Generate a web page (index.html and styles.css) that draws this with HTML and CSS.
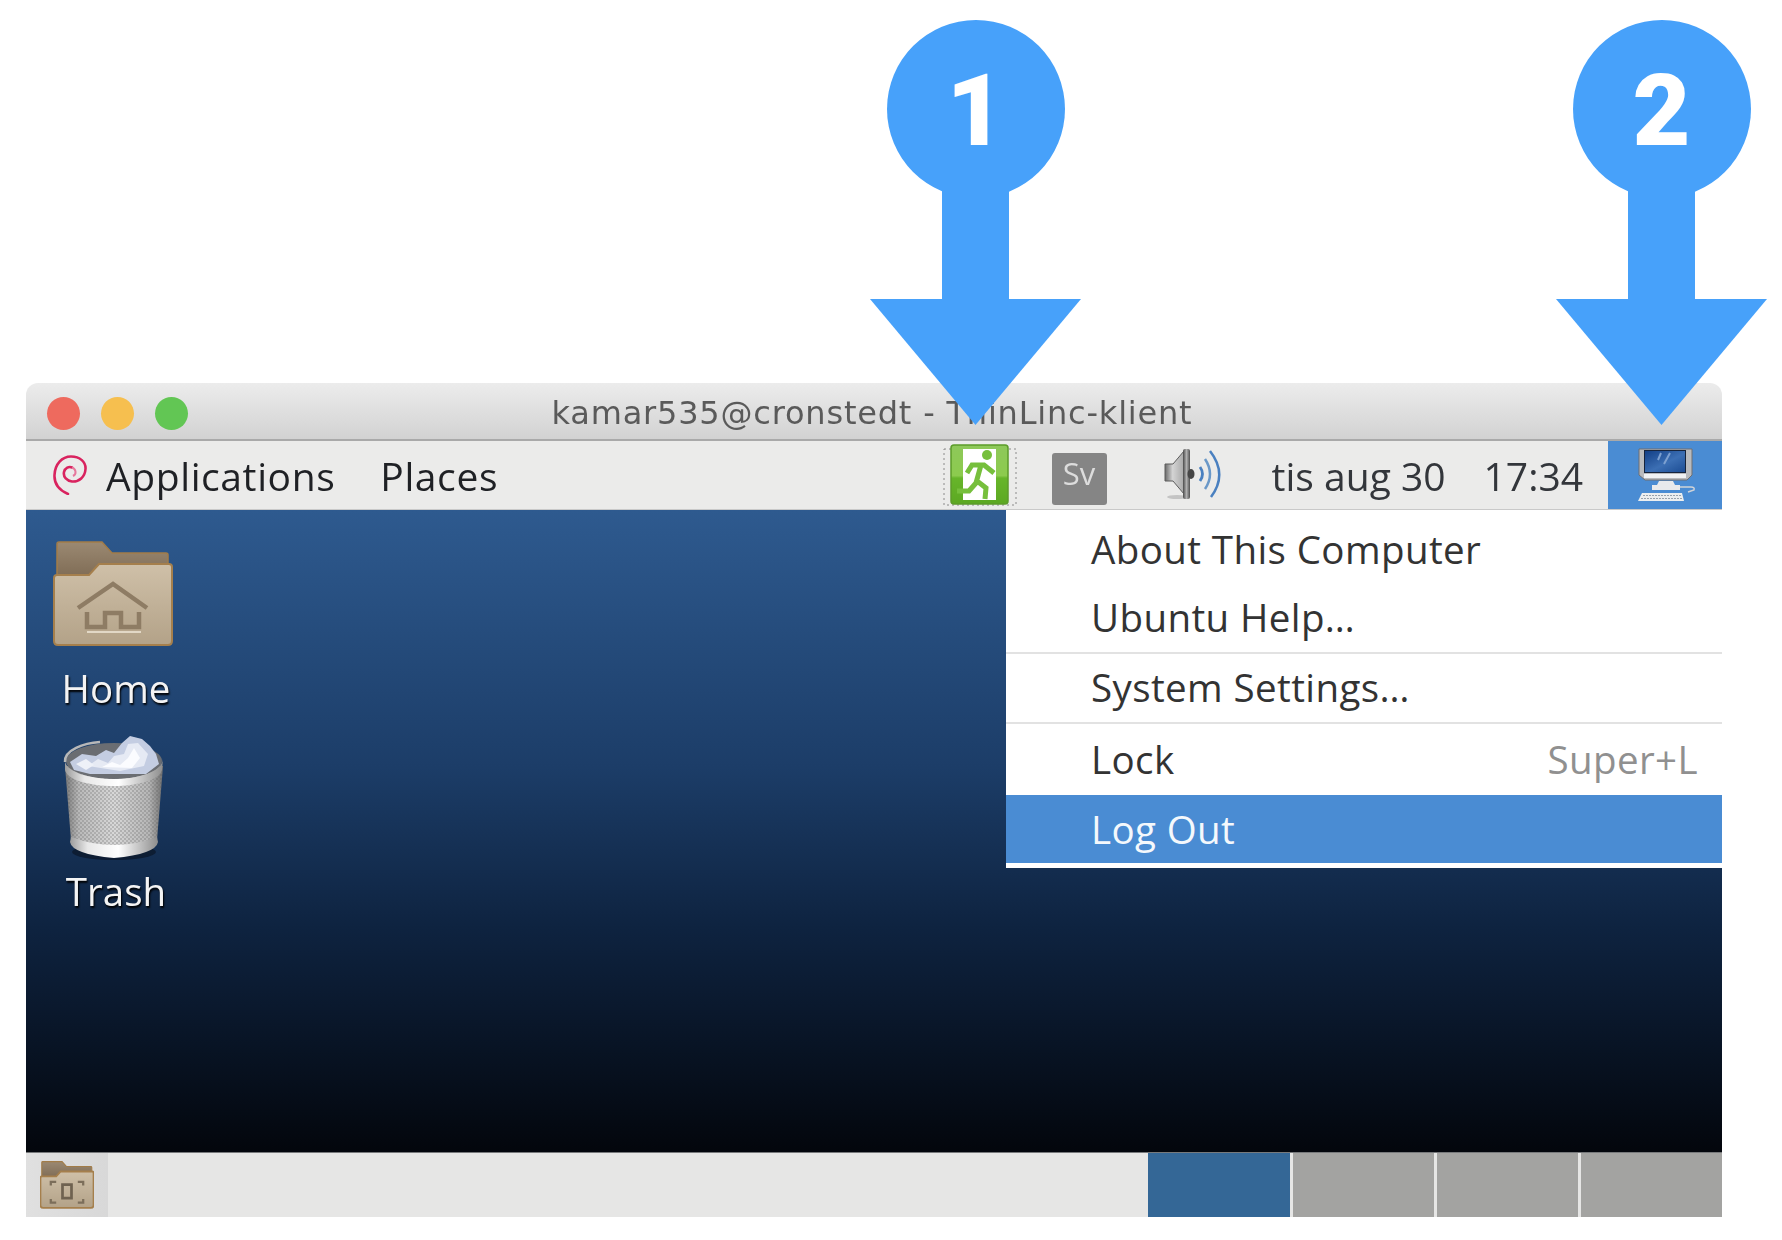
FILE: index.html
```html
<!DOCTYPE html>
<html lang="sv">
<head>
    <meta charset="UTF-8">
    <title>ThinLinc-klient</title>
    <link rel="stylesheet" href="styles.css">
</head>
<body>

    <div class="window">
        <div class="titlebar">
            <div class="lights">
                <span class="light red"></span>
                <span class="light yellow"></span>
                <span class="light green"></span>
            </div>
            <div class="title">kamar535@cronstedt - ThinLinc-klient</div>
        </div>

        <div class="menubar">
            <svg class="debian" viewBox="0 0 34 40">
                <path d="M15 39C6 35 1 29 1.500 20 2 9 9 1.500 18 1.500 27 1.500 33 7 32.500 14 32 22 26 27 19 26.500 14 26 10 22 11 17 12 13 16 11 19 12.500" fill="none" stroke="#d9235f" stroke-width="2.600" stroke-linecap="round"/>
                <path d="M19 12.500C23 14 24 19 20 21" fill="none" stroke="#e6789c" stroke-width="2"/>
            </svg>
            <span class="menu-name apps">Applications</span>
            <span class="menu-name places">Places</span>

            <div class="tray">
                <svg class="tray-exit" viewBox="0 0 74 64">
                    <defs>
                        <linearGradient id="exitGreen" x1="0" y1="0" x2="0" y2="1">
                            <stop offset="0" stop-color="#8ec85a"/>
                            <stop offset=".52" stop-color="#8ccb4e"/>
                            <stop offset=".56" stop-color="#67b52a"/>
                            <stop offset="1" stop-color="#5ca822"/>
                        </linearGradient>
                    </defs>
                    <rect x="1" y="6" width="72" height="56" fill="none" stroke="#8a8a8a" stroke-width="1" stroke-dasharray="2 3"/>
                    <rect x="8" y="2" width="57" height="59" rx="3" fill="url(#exitGreen)" stroke="#5c9c2a" stroke-width="1.500"/>
                    <rect x="20" y="6" width="33" height="51" fill="#fff"/>
                    <circle cx="44" cy="12" r="5" fill="#76bf3c"/>
                    <path d="M24 30L29 22H41L51 30M38 22L33 40M34 38L43 45 42 56M33 40L26 48H14" fill="none" stroke="#76bf3c" stroke-width="5"/>
                </svg>

                <div class="tray-lang">Sv</div>

                <svg class="tray-sound" viewBox="0 0 60 54">
                    <defs>
                        <linearGradient id="cone" x1="0" y1="0" x2="1" y2="0">
                            <stop offset="0" stop-color="#6a6a6a"/>
                            <stop offset=".4" stop-color="#d4d4d4"/>
                            <stop offset="1" stop-color="#a8a8a8"/>
                        </linearGradient>
                        <linearGradient id="disk" x1="0" y1="0" x2="1" y2="0">
                            <stop offset="0" stop-color="#4a4a4a"/>
                            <stop offset=".5" stop-color="#b0b0b0"/>
                            <stop offset="1" stop-color="#505050"/>
                        </linearGradient>
                    </defs>
                    <ellipse cx="14" cy="49" rx="10" ry="2" fill="#c4c4c4"/>
                    <path d="M2 16H10L21 3V46L10 33H2Z" fill="url(#cone)" stroke="#5d5d5d" stroke-width="1"/>
                    <rect x="20" y="1" width="7" height="50" rx="2" fill="url(#disk)"/>
                    <ellipse cx="28" cy="26" rx="3.500" ry="5" fill="#454545"/>
                    <path d="M37 19Q42 26 37 33" fill="none" stroke="#4a80c0" stroke-width="2.800"/>
                    <path d="M42 11Q52 26 42 41" fill="none" stroke="#6a98c8" stroke-width="2.500"/>
                    <path d="M47 3Q65 26 48 49" fill="none" stroke="#4a80c0" stroke-width="2.500"/>
                </svg>

                <span class="clock date">tis aug 30</span>
                <span class="clock time">17:34</span>

                <div class="computer">
                    <svg class="computer-icon" viewBox="0 0 58 54">
                        <defs>
                            <linearGradient id="screen" x1="0" y1="0" x2="1" y2="1">
                                <stop offset="0" stop-color="#123f86"/>
                                <stop offset=".55" stop-color="#3c6fb4"/>
                                <stop offset="1" stop-color="#1c4d94"/>
                            </linearGradient>
                        </defs>
                        <path d="M1 1H54V27L49 32H7L1 27Z" fill="#b9bbbe" stroke="#6e6f72" stroke-width="1"/>
                        <rect x="6" y="2" width="42" height="23" fill="#16243c"/>
                        <rect x="7" y="3" width="40" height="21" fill="url(#screen)"/>
                        <path d="M23 5L20 12M32 5L26 16" stroke="#7da0d0" stroke-width="2"/>
                        <rect x="6" y="26" width="42" height="4" fill="#f0f2f4"/>
                        <path d="M21 33H35L37 37H42V42H14V37H19Z" fill="#e8eaec"/>
                        <path d="M42 39H53Q57 39 56 42L50 44" fill="none" stroke="#d0d3d8" stroke-width="1.500"/>
                        <path d="M4 45H44L46 53H0Z" fill="#eceeef"/>
                        <path d="M5 47.500H43M3 50.500H45" stroke="#98a2ac" stroke-width="1.200" stroke-dasharray="2 1"/>
                    </svg>
                </div>
            </div>
        </div>

        <div class="desktop">
            <div class="desktop-icons">
                <div class="desktop-icon">
                    <svg class="folder" viewBox="0 0 120 106">
                        <defs>
                            <linearGradient id="folderBack" x1="0" y1="0" x2="0" y2="1">
                                <stop offset="0" stop-color="#9b8972"/>
                                <stop offset="1" stop-color="#7f6c55"/>
                            </linearGradient>
                            <linearGradient id="folderFront" x1="0" y1="0" x2="0" y2="1">
                                <stop offset="0" stop-color="#cfc0a8"/>
                                <stop offset="1" stop-color="#b3a288"/>
                            </linearGradient>
                        </defs>
                        <path d="M4 3Q4 1 6 1H49L59 12H113Q115 12 115 14V36H4Z" fill="url(#folderBack)" stroke="#a27c48" stroke-width="1.500"/>
                        <path d="M1 37Q1 34 4 34H36L46 23H116Q119 23 119 26V100Q119 104 115 104H5Q1 104 1 100Z" fill="url(#folderFront)" stroke="#a57f4c" stroke-width="2"/>
                        <path d="M25 67L60 43 94 67" fill="none" stroke="#8e7c64" stroke-width="4.500"/>
                        <path d="M34 71V86H52V72H68V86H86V71" fill="none" stroke="#8e7c64" stroke-width="4.500"/>
                        <path d="M34 91H88" stroke="#e2d8c6" stroke-width="2"/>
                    </svg>
                    <span class="icon-label home-label">Home</span>
                </div>
                <div class="desktop-icon">
                    <svg class="trash" viewBox="0 0 106 127">
                        <defs>
                            <linearGradient id="can" x1="0" y1="0" x2="1" y2="0">
                                <stop offset="0" stop-color="#777"/>
                                <stop offset=".14" stop-color="#b9b9b9"/>
                                <stop offset=".5" stop-color="#d8d8d8"/>
                                <stop offset=".86" stop-color="#b5b5b5"/>
                                <stop offset="1" stop-color="#6f6f6f"/>
                            </linearGradient>
                            <linearGradient id="rim" x1="0" y1="0" x2="1" y2="0">
                                <stop offset="0" stop-color="#9c9c9c"/>
                                <stop offset=".2" stop-color="#e8e8e8"/>
                                <stop offset=".55" stop-color="#fff"/>
                                <stop offset="1" stop-color="#8d8d8d"/>
                            </linearGradient>
                            <pattern id="mesh" width="4" height="4" patternUnits="userSpaceOnUse">
                                <circle cx="1" cy="1" r=".8" fill="#555"/>
                                <circle cx="3" cy="3" r=".8" fill="#666"/>
                            </pattern>
                        </defs>
                        <ellipse cx="54" cy="118" rx="42" ry="8" fill="#0a1626" opacity=".7"/>
                        <path d="M5 32L11 106Q54 126 97 106L103 32Z" fill="url(#can)"/>
                        <path d="M5 32L11 106Q54 126 97 106L103 32Z" fill="url(#mesh)" opacity=".6"/>
                        <path d="M11 103Q54 119 97 103L98 108Q96 120 54 124 12 120 10 108Z" fill="url(#rim)"/>
                        <ellipse cx="54" cy="27" rx="48" ry="18" fill="#6a6d72"/>
                        <path d="M10 28L22 20 36 22 46 16 54 19 62 9 70 2 82 5 90 12 96 20 99 30 86 40H30L14 36Z" fill="#c4cde2"/>
                        <path d="M28 32L38 25 48 29 54 22 64 20 68 10 78 9 88 20 84 32 60 37Z" fill="#e6eaf4"/>
                        <path d="M42 33L52 28 60 31 68 24 74 14 80 24 72 34Z" fill="#fbfcff"/>
                        <path d="M16 30L26 25 34 31 26 36Z" fill="#eef1f8"/>
                        <path d="M5 27C6 38 30 45 54 45 78 45 102 38 103 25L102 36C100 46 76 52 54 52 30 52 7 46 5 36Z" fill="url(#rim)"/>
                        <path d="M5 28C4 16 24 9 40 8" fill="none" stroke="#b8b8b8" stroke-width="2.500"/>
                    </svg>
                    <span class="icon-label trash-label">Trash</span>
                </div>
            </div>

            <div class="system-menu">
                <div class="menu-row">About This Computer</div>
                <div class="menu-row">Ubuntu Help…</div>
                <div class="menu-sep"></div>
                <div class="menu-row">System Settings…</div>
                <div class="menu-sep"></div>
                <div class="menu-row lock-row">Lock <span class="shortcut">Super+L</span></div>
                <div class="menu-row active">Log Out</div>
            </div>
        </div>

        <div class="bottom-panel">
            <div class="show-desktop">
                <svg class="small-folder" viewBox="0 0 120 106">
                    <path d="M4 3Q4 1 6 1H49L59 12H113Q115 12 115 14V36H4Z" fill="url(#folderBack)" stroke="#a27c48" stroke-width="2.500"/>
                    <path d="M1 37Q1 34 4 34H36L46 23H116Q119 23 119 26V98Q119 104 113 104H7Q1 104 1 98Z" fill="url(#folderFront)" stroke="#a57f4c" stroke-width="4"/>
                    <path d="M50 52H70V82H50Z" fill="none" stroke="#6f6250" stroke-width="6"/>
                    <path d="M24 54V46H36M96 54V46H84M24 84V92H36M96 84V92H84" fill="none" stroke="#7c6e5a" stroke-width="5"/>
                </svg>
            </div>
            <div class="workspaces">
                <div class="workspace current"></div>
                <div class="workspace"></div>
                <div class="workspace"></div>
                <div class="workspace"></div>
            </div>
        </div>
    </div>

    <div class="callout first">
        <div class="bubble">1</div>
        <div class="stem"></div>
        <div class="head"></div>
    </div>
    <div class="callout second">
        <div class="bubble">2</div>
        <div class="stem"></div>
        <div class="head"></div>
    </div>

</body>
</html>
```

FILE: styles.css
```css
body {
    margin: 0;
    background: #fff;
    font-family: "Open Sans", "Noto Sans", sans-serif;
    height: 1240px;
    overflow: hidden;
}

.window {
    width: 1696px;
    margin: 383px 0 0 26px;
    filter: blur(0.6px);
}

.titlebar {
    height: 52px;
    display: grid;
    grid-template-columns: 1fr auto 1fr;
    align-items: center;
    padding: 4px 4px 0 0;
    border-radius: 12px 12px 0 0;
    border-bottom: 2px solid #a9a9a9;
    background: linear-gradient(#ececec, #d2d2d2);
}
.lights {
    display: flex;
    gap: 21px;
    padding-left: 21px;
}
.light {
    width: 33px;
    height: 33px;
    border-radius: 50%;
}
.red { background: #ee6a5e; }
.yellow { background: #f6bf4f; }
.green { background: #62c654; }
.title {
    font-family: "DejaVu Sans", sans-serif;
    font-size: 32px;
    letter-spacing: 0.8px;
    color: #5a5a5a;
}

.menubar {
    height: 69px;
    display: flex;
    align-items: center;
    background: #ebebea;
    border-bottom: 1px solid #c9c9c9;
    box-sizing: border-box;
}
.debian {
    width: 34px;
    height: 40px;
    margin-left: 27px;
}
.menu-name {
    font-size: 39px;
    letter-spacing: 0.6px;
    color: #1f2125;
}
.apps { margin-left: 19px; }
.places { margin-left: 45px; }

.tray {
    display: flex;
    align-items: center;
    margin-left: auto;
    height: 100%;
}
.tray-exit {
    width: 74px;
    height: 64px;
}
.tray-lang {
    width: 55px;
    height: 52px;
    margin-left: 35px;
    margin-top: 8px;
    border-radius: 3px;
    background: #858585;
    color: #dcdcdc;
    font-size: 31px;
    line-height: 40px;
    text-align: center;
}
.tray-sound {
    width: 60px;
    height: 54px;
    margin-left: 56px;
}
.clock {
    font-size: 39px;
    color: #33363b;
}
.date { margin-left: 49px; }
.time { margin-left: 38px; }
.computer {
    width: 114px;
    height: 100%;
    margin-left: 25px;
    background: #4a8cd3;
    display: flex;
    justify-content: center;
    align-items: center;
}
.computer-icon {
    width: 58px;
    height: 54px;
    margin-left: 4px;
}

.desktop {
    position: relative;
    height: 642px;
    background: linear-gradient(#2e5a8f, #1c3d68 40%, #0e2340 65%, #03060c);
}
.desktop-icons {
    display: flex;
    flex-direction: column;
    width: 180px;
    padding-top: 31px;
}
.desktop-icon {
    display: flex;
    flex-direction: column;
    align-items: center;
}
.folder {
    width: 120px;
    height: 106px;
    margin-right: 6px;
}
.trash {
    width: 106px;
    height: 127px;
    margin-right: 6px;
}
.icon-label {
    font-size: 38.500px;
    color: #f4f4f4;
    line-height: 48px;
    text-shadow: 1px 2px 2px #000;
}
.home-label {
    margin-top: 17px;
    margin-bottom: 22px;
}
.trash-label { margin-top: 6px; }

.system-menu {
    position: absolute;
    top: 0;
    left: 980px;
    right: 0;
    padding: 6px 0 5px;
    background: #fff;
    color: #333;
    font-size: 38.500px;
    letter-spacing: 0.4px;
}
.menu-row {
    height: 68px;
    box-sizing: border-box;
    padding: 0 24px 2px 85px;
    display: flex;
    align-items: center;
    justify-content: space-between;
}
.lock-row { height: 71px; }
.menu-sep {
    height: 2px;
    background: #e2e2e2;
}
.shortcut { color: #909090; }
.active {
    padding-bottom: 0;
    background: #4a8cd3;
    color: #f4f8fc;
}

.bottom-panel {
    height: 65px;
    display: flex;
    justify-content: space-between;
    background: #e6e6e5;
    border-top: 1px solid #77797b;
    box-sizing: border-box;
}
.show-desktop {
    width: 82px;
    display: flex;
    justify-content: center;
    align-items: center;
    background: linear-gradient(90deg, #e0e0e0, #d8d8d8);
}
.small-folder {
    width: 54px;
    height: 50px;
}
.workspaces {
    display: flex;
    gap: 3px;
}
.workspace {
    width: 141px;
    background: #a3a3a1;
}
.workspace.current {
    width: 142px;
    background: #346796;
}

.callout {
    position: absolute;
    top: 20px;
    width: 211px;
    display: flex;
    flex-direction: column;
    align-items: center;
}
.first { left: 870px; }
.second { left: 1556px; }
.bubble {
    width: 178px;
    height: 178px;
    border-radius: 50%;
    background: #47a1fa;
    color: #fff;
    font-family: Roboto, "Liberation Sans", sans-serif;
    font-weight: 900;
    font-size: 100px;
    line-height: 182px;
    text-align: center;
}
.stem {
    width: 67px;
    height: 111px;
    margin-top: -10px;
    background: #47a1fa;
}
.head {
    width: 211px;
    height: 126px;
    background: #47a1fa;
    clip-path: polygon(0 0, 100% 0, 50% 100%);
}
```
